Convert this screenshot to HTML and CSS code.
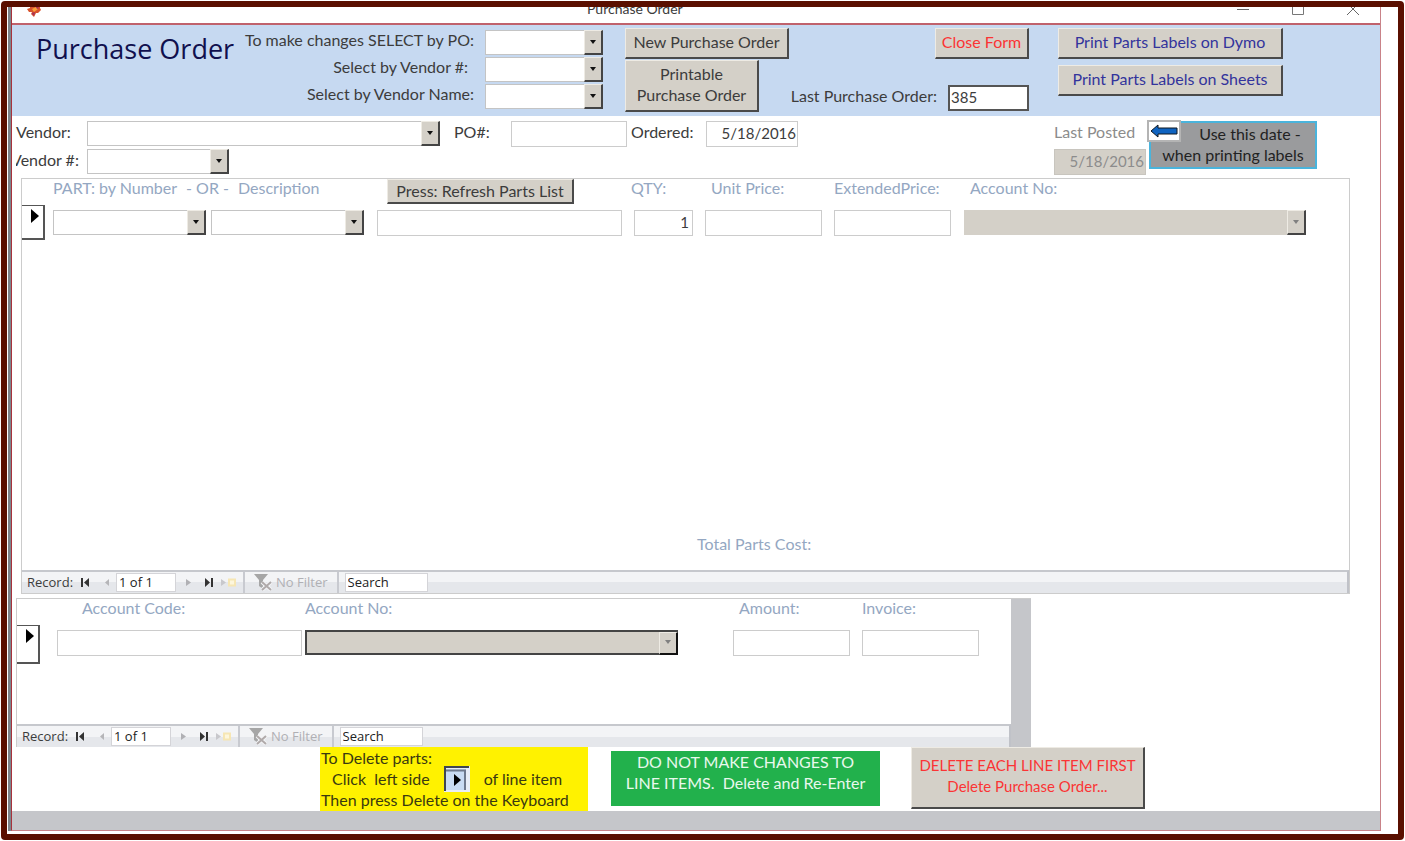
FILE: index.html
```html
<!DOCTYPE html>
<html lang="en">
<head>
  <meta charset="UTF-8">
  <title>Purchase Order</title>
  <link rel="stylesheet" href="styles.css">
</head>
<body>
  <div class="frame">
    <div class="window">
      <div class="titlebar">
        <svg class="app-icon" width="14" height="14" viewBox="0 0 14 14">
          <path d="M3 1h3l2 2 3-2 2 1v3l1 2-3 3H9l-2 4-3-3 1-2H2L0 6l3-1z" fill="#d9532c"/>
          <path d="M5 6l4-2 2 2-4 3z" fill="#f9a13a"/>
          <path d="M5 10l3-1-1 4-2-2zM10 2l2 1-1 3-2-1z" fill="#a8325a"/>
        </svg>
        <span class="caption">Purchase Order</span>
        <div class="window-buttons">
          <button aria-label="Minimize"><svg width="14" height="14" viewBox="0 0 14 14"><path d="M1 8.500h12" stroke="#666"/></svg></button>
          <button aria-label="Maximize"><svg width="14" height="14" viewBox="0 0 14 14"><path d="M1.500 2.500h11v11h-11z" fill="none" stroke="#777"/></svg></button>
          <button aria-label="Close"><svg width="14" height="14" viewBox="0 0 14 14"><path d="M1 2l12 12M13 2L1 14" stroke="#666"/></svg></button>
        </div>
      </div>

      <header class="form-header">
        <h1>Purchase Order</h1>
        <div class="lookups">
          <label for="byPo">To make changes SELECT by PO:</label>
          <span class="combo"><select id="byPo"><option></option></select></span>
          <label for="byVendorNo" class="inset">Select by Vendor #:</label>
          <span class="combo"><select id="byVendorNo"><option></option></select></span>
          <label for="byVendorName">Select by Vendor Name:</label>
          <span class="combo"><select id="byVendorName"><option></option></select></span>
        </div>
        <div class="order-actions">
          <button class="btn">New Purchase Order</button>
          <button class="btn btn-tall">Printable<br>Purchase Order</button>
        </div>
        <div class="close-area">
          <button class="btn btn-red">Close Form</button>
          <div class="last-order">
            <label for="lastPo">Last Purchase Order:</label>
            <input id="lastPo" class="field dark" value="385">
          </div>
        </div>
        <div class="print-actions">
          <button class="btn btn-blue">Print Parts Labels on Dymo</button>
          <button class="btn btn-blue">Print Parts Labels on Sheets</button>
        </div>
      </header>

      <main>
        <section class="vendor">
          <div class="vendor-rows">
            <div class="row">
              <label class="vendor-label" for="vendor">Vendor:</label>
              <span class="combo vendor-name"><select id="vendor"><option></option></select></span>
              <label class="po-label" for="po">PO#:</label>
              <input id="po" class="field po">
              <label class="ordered-label" for="ordered">Ordered:</label>
              <input id="ordered" class="field date" value="5/18/2016">
            </div>
            <div class="row">
              <label class="vendor-label cut" for="vendorNo"><span>Vendor #:</span></label>
              <span class="combo vendor-no"><select id="vendorNo"><option></option></select></span>
            </div>
          </div>
          <div class="posted">
            <label for="posted">Last Posted</label>
            <input id="posted" class="field date disabled" value="5/18/2016" disabled>
          </div>
          <div class="note">
            <button class="note-arrow" aria-label="Use last posted date">
              <svg width="28" height="14" viewBox="0 0 28 14"><path d="M1 7L8 1v3h19v6H8v3z" fill="#0f63c0" stroke="#101820"/></svg>
            </button>
            <p class="first">Use this date -</p>
            <p>when printing labels</p>
          </div>
        </section>

        <section class="subform parts">
          <div class="grid parts-grid">
            <span></span>
            <div class="heads"><span>PART: by Number</span><span>- OR -</span><span>Description</span></div>
            <button class="btn btn-refresh">Press: Refresh Parts List</button>
            <label class="head qty-head" for="qty">QTY:</label>
            <label class="head indent" for="unit">Unit Price:</label>
            <label class="head" for="ext">ExtendedPrice:</label>
            <label class="head indent" for="acct">Account No:</label>

            <button class="selector" aria-label="Select record"><svg width="8" height="14" viewBox="0 0 8 14"><path d="M0 0l8 7-8 7z"/></svg></button>
            <span class="combo w-part"><select aria-label="Part number"><option></option></select></span>
            <span class="combo w-part"><select aria-label="Part description"><option></option></select></span>
            <input class="field w-long" aria-label="Part">
            <input id="qty" class="field w-qty right" value="1">
            <input id="unit" class="field w-money">
            <input id="ext" class="field w-money">
            <span class="combo disabled w-acct"><select id="acct" disabled><option></option></select></span>
          </div>
          <p class="total">Total Parts Cost:</p>
          <nav class="record-nav">
            <span class="rec-label">Record:</span>
            <button aria-label="First"><svg width="10" height="9" viewBox="0 0 10 9"><path d="M0 0h2v9H0zM8 0v9L3 4.500z" fill="#333"/></svg></button>
            <button aria-label="Previous"><svg width="10" height="9" viewBox="0 0 10 9"><path d="M7 1v7L3 4.500z" fill="#b5b5b8"/></svg></button>
            <input class="rec-pos" value="1 of 1" aria-label="Record position">
            <button aria-label="Next"><svg width="10" height="9" viewBox="0 0 10 9"><path d="M3 1v7l5-3.500z" fill="#b0b0b4"/></svg></button>
            <button aria-label="Last"><svg width="10" height="9" viewBox="0 0 10 9"><path d="M7 0h2v9H7zM1 0v9l5-4.500z" fill="#333"/></svg></button>
            <button aria-label="New"><svg width="16" height="9" viewBox="0 0 16 9"><path d="M0 1v7l5-3.500z" fill="#c8c8cc"/><path d="M8 1.500h6v6H8z" fill="#fdf6dc" stroke="#f6e6b4" stroke-width="2"/></svg></button>
            <span class="filter">
              <svg width="18" height="17" viewBox="0 0 18 17"><path d="M0 0h14L9 6v9l-4-3V6z" fill="#a6a6a6"/><path d="M8 8l9 8M17 8l-9 8" stroke="#f3f4f6" stroke-width="4"/><path d="M8 8l9 8M17 8l-9 8" stroke="#b0aaaa" stroke-width="2"/></svg>
              No Filter
            </span>
            <input class="rec-search" value="Search" aria-label="Search">
          </nav>
        </section>

        <section class="subform accounts">
          <div class="accounts-main">
            <div class="grid acct-grid">
              <span></span>
              <label class="head code-head" for="code">Account Code:</label>
              <label class="head" for="acct2">Account No:</label>
              <label class="head indent" for="amount">Amount:</label>
              <label class="head" for="invoice">Invoice:</label>

              <button class="selector" aria-label="Select record"><svg width="8" height="14" viewBox="0 0 8 14"><path d="M0 0l8 7-8 7z"/></svg></button>
              <input id="code" class="field w-long">
              <span class="combo disabled focused w-acct2"><select id="acct2" disabled><option></option></select></span>
              <input id="amount" class="field w-money">
              <input id="invoice" class="field w-money">
            </div>
            <nav class="record-nav">
              <span class="rec-label">Record:</span>
              <button aria-label="First"><svg width="10" height="9" viewBox="0 0 10 9"><path d="M0 0h2v9H0zM8 0v9L3 4.500z" fill="#333"/></svg></button>
              <button aria-label="Previous"><svg width="10" height="9" viewBox="0 0 10 9"><path d="M7 1v7L3 4.500z" fill="#b5b5b8"/></svg></button>
              <input class="rec-pos" value="1 of 1" aria-label="Record position">
              <button aria-label="Next"><svg width="10" height="9" viewBox="0 0 10 9"><path d="M3 1v7l5-3.500z" fill="#b0b0b4"/></svg></button>
              <button aria-label="Last"><svg width="10" height="9" viewBox="0 0 10 9"><path d="M7 0h2v9H7zM1 0v9l5-4.500z" fill="#333"/></svg></button>
              <button aria-label="New"><svg width="16" height="9" viewBox="0 0 16 9"><path d="M0 1v7l5-3.500z" fill="#c8c8cc"/><path d="M8 1.500h6v6H8z" fill="#fdf6dc" stroke="#f6e6b4" stroke-width="2"/></svg></button>
              <span class="filter">
                <svg width="18" height="17" viewBox="0 0 18 17"><path d="M0 0h14L9 6v9l-4-3V6z" fill="#a6a6a6"/><path d="M8 8l9 8M17 8l-9 8" stroke="#f3f4f6" stroke-width="4"/><path d="M8 8l9 8M17 8l-9 8" stroke="#b0aaaa" stroke-width="2"/></svg>
                No Filter
              </span>
              <input class="rec-search" value="Search" aria-label="Search">
            </nav>
          </div>
          <div class="scroll-strip"></div>
        </section>

        <section class="notices">
          <div class="notice yellow">
            <p>To Delete parts:</p>
            <p class="middle"><span>Click&nbsp; left side</span>
              <svg width="26" height="26" viewBox="0 0 26 26"><path d="M0 0h26v26H0z" fill="#e9eef6"/><path d="M0 0h25v2H0z" fill="#3f4652"/><path d="M0 0h2v25H0z" fill="#3f4652"/><path d="M2 3h20v21H2z" fill="#c9dcf2"/><path d="M2 4.500h19V24" fill="none" stroke="#6f7a8c" stroke-width="2"/><path d="M10 8l7 6-7 6z"/></svg>
              <span>of line item</span></p>
            <p>Then press Delete on the Keyboard</p>
          </div>
          <div class="notice green">
            <p>DO NOT MAKE CHANGES TO</p>
            <p>LINE ITEMS.&nbsp; Delete and Re-Enter</p>
          </div>
          <button class="btn btn-red btn-delete">DELETE EACH LINE ITEM FIRST<br>Delete Purchase Order...</button>
        </section>
      </main>

      <footer class="statusbar"></footer>
    </div>
  </div>
</body>
</html>
```
FILE: styles.css
```css
*, *::before, *::after {
  box-sizing: border-box;
}

body {
  margin: 0;
  padding: 1px;
  background: #fff;
  color: #3c3c3c;
  font-family: 'Lato', 'Open Sans', sans-serif;
  font-size: 16px;
  line-height: 21px;
}

h1, p {
  margin: 0;
}

button, input, select {
  font: inherit;
  color: inherit;
  margin: 0;
  border-radius: 0;
}

label, .heads {
  white-space: nowrap;
}

.frame {
  display: flex;
  min-height: calc(100vh - 2px);
  border: 6px solid #5a0f00;
  border-radius: 4px;
  padding: 0 17px 3px 1px;
}

.window {
  flex: 1;
  display: flex;
  flex-direction: column;
  border: 1px solid #c98288;
  border-top: 0;
  border-left-color: #a8323c;
  box-shadow: -3px 0 0 #7d858c;
  margin-left: 3px;
}

/* Title bar, upper part runs out of view */
.titlebar {
  display: flex;
  align-items: flex-end;
  height: 18px;
  overflow: hidden;
  border-bottom: 2px solid #c0626c;
  padding: 0 20px 0 15px;
}

.app-icon {
  flex: none;
  margin-bottom: 6px;
}

.caption {
  flex: 1;
  margin-left: 546px;
  font-size: 14px;
  line-height: 28px;
}

.window-buttons {
  display: flex;
  gap: 41px;
}

.window-buttons button {
  display: flex;
  height: 22px;
  padding: 0;
  border: 0;
  background: none;
}

/* Blue header */
.form-header {
  display: flex;
  align-items: flex-start;
  min-height: 91px;
  padding: 3px 97px 3px 24px;
  background: #c6d9f1;
}

h1 {
  width: 204px;
  margin-top: 2px;
  font-family: 'Open Sans', sans-serif;
  font-weight: 400;
  font-size: 27px;
  line-height: 38px;
  color: #10104e;
  white-space: nowrap;
}

.lookups {
  display: grid;
  grid-template-columns: 234px 118px;
  gap: 2px 11px;
  margin-top: 2px;
  text-align: right;
  line-height: 20px;
}

.lookups .inset {
  padding-right: 6px;
}

.order-actions {
  display: flex;
  flex-direction: column;
  align-items: flex-start;
  gap: 1px;
  margin-left: 22px;
}

.close-area {
  display: flex;
  flex-direction: column;
  align-items: flex-end;
  justify-content: space-between;
  flex: 1;
  min-height: 83px;
}

.last-order {
  display: flex;
  gap: 11px;
}

.print-actions {
  display: flex;
  flex-direction: column;
  gap: 6px;
  width: 225px;
  margin-left: 29px;
}

/* Controls */
.btn {
  height: 31px;
  padding: 0 4px 3px 4px;
  border: 1px solid #eeebe4;
  border-right: 2px solid #4a4a4a;
  border-bottom: 2px solid #4a4a4a;
  background: #d4d0c8;
  color: #3c3c3c;
  line-height: 21px;
  white-space: nowrap;
}

.order-actions .btn {
  width: 164px;
}

.order-actions .btn-tall {
  width: 134px;
  height: 52px;
}

.close-area .btn {
  width: 94px;
}

.btn.btn-red {
  color: #fb3434;
}

.btn.btn-blue {
  color: #33349c;
}

.field {
  height: 26px;
  padding: 0 3px 2px;
  border: 1px solid #ccc;
  background: #fff;
  font-size: 15px;
}

.field.dark {
  width: 81px;
  padding: 0 1px 2px;
  border: 2px solid #555;
}

.field.date {
  width: 92px;
  padding-right: 1px;
  text-align: right;
}

.field.disabled {
  background: #d4d0c8;
  border-color: #c8c5be;
  color: #8c8c8c;
}

.field.right {
  text-align: right;
}

.combo {
  position: relative;
  display: block;
  height: 25px;
}

.combo select {
  appearance: none;
  display: block;
  width: 100%;
  height: 100%;
  border: 1px solid #c4c4c4;
  background: #fff;
}

.combo::before {
  content: '';
  position: absolute;
  top: 0;
  right: 0;
  width: 19px;
  height: 100%;
  border: 1px solid #eeebe4;
  border-right: 2px solid #444;
  border-bottom: 2px solid #444;
  background: #d4d0c8;
  pointer-events: none;
}

.combo::after {
  content: '';
  position: absolute;
  top: 10px;
  right: 7px;
  border: 3px solid transparent;
  border-top: 4px solid #111;
  border-bottom: 0;
  pointer-events: none;
}

.combo.disabled select {
  background: #d4d0c8;
  border-color: #d4d0c8;
  opacity: 1;
}

.combo.disabled::after {
  border-top-color: #808080;
}

.combo.focused select {
  border: 2px solid #444;
}

.combo.focused::before {
  top: 2px;
  height: 23px;
  border-right-color: #111;
  border-bottom-color: #111;
}

/* Vendor block */
.vendor {
  display: flex;
  padding: 5px 63px 3px 4px;
}

.vendor-rows {
  flex: 1;
  display: flex;
  flex-direction: column;
  gap: 2px;
}

.row {
  display: flex;
  line-height: 22px;
}

.vendor-label {
  width: 71px;
}

.vendor-label.cut {
  overflow: hidden;
}

.cut span {
  margin-left: -5px;
}

.vendor-name {
  width: 353px;
}

.vendor-no {
  width: 142px;
}

.po-label {
  width: 71px;
  padding-left: 14px;
}

.po {
  width: 116px;
}

.ordered-label {
  width: 79px;
  padding-left: 4px;
}

.posted {
  display: flex;
  flex-direction: column;
  gap: 6px;
  width: 91px;
  margin-right: 4px;
  color: #8c8c8c;
  line-height: 22px;
}

.note {
  position: relative;
  width: 168px;
  height: 48px;
  border: 2px solid #4ab4dc;
  background: #9a9b9d;
  color: #222;
  text-align: center;
  white-space: nowrap;
}

.note .first {
  padding-left: 34px;
}

.note-arrow {
  position: absolute;
  top: -3px;
  left: -4px;
  display: flex;
  align-items: center;
  justify-content: center;
  width: 34px;
  height: 22px;
  padding: 0;
  border: 2px solid #b4b4b4;
  background: #fff;
}

/* Subforms */
.subform {
  border: 1px solid #ccc;
}

.parts {
  display: flex;
  flex-direction: column;
  min-height: 416px;
  margin: 0 30px 0 9px;
}

.grid {
  display: grid;
  grid-template-rows: 26px auto;
  align-items: start;
}

.parts-grid {
  grid-template-columns: 31px 158px 166px 257px 71px 129px 130px 1fr;
}

.acct-grid {
  grid-template-columns: 40px 248px 428px 129px 1fr;
}

.grid .field, .grid .combo {
  margin-top: 5px;
}

.head, .heads {
  color: #94a7c2;
  line-height: 18px;
}

.heads {
  grid-column: span 2;
  display: flex;
  gap: 9px;
}

.qty-head {
  margin-left: -3px;
}

.head.indent {
  padding-left: 6px;
}

.code-head {
  padding-left: 25px;
}

.btn-refresh {
  width: 187px;
  height: 25px;
  margin-left: 10px;
  padding-bottom: 1px;
}

.selector {
  display: flex;
  justify-content: center;
  align-items: flex-start;
  width: 23px;
  height: 35px;
  padding: 3px 0 0 4px;
  border: 1px solid #555;
  border-right-width: 2px;
  border-bottom-width: 2px;
  border-left: 0;
  background: #fff;
}

.acct-grid .selector {
  height: 39px;
}

.w-part {
  width: 153px;
}

.w-long {
  width: 245px;
}

.w-qty {
  width: 59px;
}

.w-money {
  width: 117px;
}

.w-acct {
  width: 342px;
}

.w-acct2 {
  width: 373px;
}

.total {
  margin: auto 0 16px 675px;
  color: #94a7c2;
}

/* Record navigation bar */
.record-nav {
  display: flex;
  align-items: center;
  height: 23px;
  padding-left: 5px;
  border-top: 2px solid #c6c8cd;
  border-right: 2px solid #c0c2c8;
  background: linear-gradient(#f3f4f6 50%, #e5e7eb 50%);
  font-family: 'Open Sans', sans-serif;
  font-size: 13px;
  line-height: 19px;
}

.record-nav button {
  display: flex;
  margin-right: 11px;
  padding: 0;
  border: 0;
  background: none;
}

.record-nav .rec-label {
  width: 54px;
}

.record-nav button[aria-label="Previous"] {
  margin-right: 4px;
}

.record-nav button[aria-label="New"] {
  margin: 0 6px 0 -4px;
}

.rec-pos, .rec-search {
  height: 19px;
  border: 1px solid #d4d4d8;
  background: #fff;
  padding: 0 2px;
  color: #222;
}

.rec-pos {
  width: 60px;
  margin-right: 7px;
}

.rec-search {
  width: 83px;
}

.filter {
  display: flex;
  align-items: center;
  gap: 4px;
  height: 21px;
  padding: 0 9px;
  margin-right: 6px;
  border-left: 2px solid #c8cad0;
  border-right: 2px solid #c8cad0;
  color: #b0b0b4;
  white-space: nowrap;
}

/* Accounts subform */
.accounts {
  display: flex;
  width: 1015px;
  margin: 4px 0 0 4px;
  border-bottom: 0;
  border-right: 0;
}

.accounts-main {
  flex: 1;
  display: flex;
  flex-direction: column;
  min-height: 148px;
}

.accounts .record-nav {
  margin-top: auto;
}

.scroll-strip {
  width: 20px;
  background: #c5c6ca;
}

/* Bottom notices */
.notices {
  display: flex;
  align-items: flex-start;
  padding-left: 308px;
  white-space: nowrap;
}

.yellow {
  width: 268px;
  height: 64px;
  padding: 0 1px;
  background: #fff200;
  color: #3a3a10;
}

.middle {
  display: flex;
  align-items: center;
  height: 21px;
  gap: 14px;
  padding-left: 11px;
}

.middle svg {
  flex: none;
}

.green {
  width: 269px;
  height: 55px;
  margin: 4px 31px 0 23px;
  background: #22b14c;
  color: #e8f8ec;
  text-align: center;
}

.btn-delete {
  width: 234px;
  height: 62px;
  padding-bottom: 4px;
  font-size: 15px;
}

.statusbar {
  height: 19px;
  margin-top: auto;
  background: #c5c6ca;
}
```
